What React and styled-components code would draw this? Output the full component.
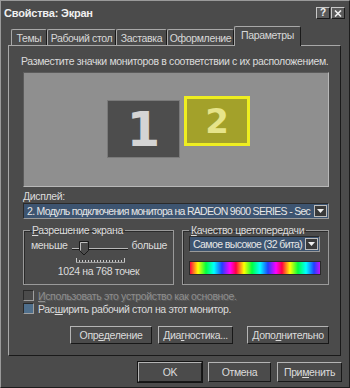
import React from "react";
import styled, { createGlobalStyle } from "styled-components";

const Global = createGlobalStyle`
  html, body {
    margin: 0;
    padding: 0;
    background: #4b4b4b;
  }
  body {
    font-family: "Liberation Sans", Arial, sans-serif;
    font-size: 10.5px;
    letter-spacing: -0.35px;
    color: #dcdcdc;
  }
`;

const Window = styled.div`
  box-sizing: border-box;
  width: 350px;
  height: 388px;
  background: #4b4b4b;
  border-top: 1px solid #9a9a9a;
  border-left: 1px solid #9a9a9a;
  border-right: 1px solid #1c1c1c;
  border-bottom: 1px solid #1c1c1c;
  display: flex;
  flex-direction: column;
  overflow: hidden;
`;

const TitleBar = styled.div`
  height: 20px;
  display: flex;
  align-items: center;
  justify-content: space-between;
  padding: 2px 4px 0 3px;
`;

const Title = styled.span`
  font-weight: bold;
  font-size: 11px;
  letter-spacing: -0.2px;
  color: #f0f0f0;
`;

const TitleButtons = styled.div`
  display: flex;
  gap: 1px;
`;

const TitleButton = styled.div`
  box-sizing: border-box;
  width: 14px;
  height: 12px;
  background: #5a5a5a;
  border-top: 1px solid #c8c8c8;
  border-left: 1px solid #c8c8c8;
  border-right: 1px solid #1a1a1a;
  border-bottom: 1px solid #1a1a1a;
  display: flex;
  align-items: center;
  justify-content: center;
  font-weight: bold;
  font-size: 10px;
  color: #f0f0f0;
  line-height: 1;
`;

const Body = styled.div`
  padding: 4px 8px 0 7px;
  display: flex;
  flex-direction: column;
`;

const TabStrip = styled.div`
  display: flex;
  align-items: flex-end;
  height: 18px;
  padding-left: 3px;
  position: relative;
  z-index: 1;
`;

const Tab = styled.div`
  box-sizing: border-box;
  width: ${(p) => p.$w}px;
  height: ${(p) => (p.$active ? 20 : 16)}px;
  margin-bottom: ${(p) => (p.$active ? -1 : 0)}px;
  background: #4b4b4b;
  border-top: 1px solid #a8a8a8;
  border-left: 1px solid #a8a8a8;
  border-right: 1px solid #1a1a1a;
  border-radius: 2px 2px 0 0;
  display: flex;
  align-items: center;
  justify-content: center;
  padding-bottom: ${(p) => (p.$active ? 3 : 0)}px;
  color: #d8d8d8;
  white-space: nowrap;
`;

const Panel = styled.div`
  box-sizing: border-box;
  height: 311px;
  border-top: 1px solid #a8a8a8;
  border-left: 1px solid #a8a8a8;
  border-right: 1px solid #1a1a1a;
  border-bottom: 1px solid #1a1a1a;
  padding: 9px 11px 0 14px;
  display: flex;
  flex-direction: column;
`;

const Hint = styled.div`
  height: 14px;
  margin-left: -2px;
  white-space: nowrap;
`;

const MonitorArea = styled.div`
  box-sizing: border-box;
  position: relative;
  height: 115px;
  margin-top: 3px;
  background: #8f8f8f;
  border-top: 1px solid #5c5c5c;
  border-left: 1px solid #5c5c5c;
  border-right: 1px solid #b8b8b8;
  border-bottom: 1px solid #b8b8b8;
`;

const Monitor = styled.div`
  box-sizing: border-box;
  position: absolute;
  left: ${(p) => p.$x}px;
  top: ${(p) => p.$y}px;
  width: ${(p) => p.$w}px;
  height: ${(p) => p.$h}px;
  background: ${(p) => p.$bg};
  border: ${(p) => p.$border};
  display: flex;
  align-items: center;
  justify-content: center;
  font-family: "DejaVu Sans", Arial, sans-serif;
  font-weight: bold;
  font-size: ${(p) => p.$size}px;
  letter-spacing: 0;
  color: ${(p) => p.$fg};
  line-height: 1;
`;

const FieldLabel = styled.div`
  margin-top: 3px;
  height: 13px;
`;

const Select = styled.div`
  box-sizing: border-box;
  height: ${(p) => p.$h || 16}px;
  width: ${(p) => (p.$w ? `${p.$w}px` : "auto")};
  background: #3d5470;
  border-top: 1px solid #2a2a2a;
  border-left: 1px solid #2a2a2a;
  border-right: 1px solid #9a9a9a;
  border-bottom: 1px solid #9a9a9a;
  display: flex;
  align-items: center;
  padding-left: 3px;
  color: #e6e6e6;
  overflow: hidden;
  white-space: nowrap;
  letter-spacing: ${(p) => p.$spacing || "inherit"};
`;

const SelectText = styled.span`
  flex: 1;
  overflow: hidden;
`;

const ArrowButton = styled.div`
  box-sizing: border-box;
  flex: none;
  width: 13px;
  height: 12px;
  margin-right: 1px;
  background: #3a3a3a;
  border: 1px solid #bdbdbd;
  display: flex;
  align-items: center;
  justify-content: center;
`;

const Groups = styled.div`
  display: flex;
  gap: 8px;
  margin-top: 5px;
`;

const GroupBox = styled.fieldset`
  box-sizing: border-box;
  margin: 0;
  width: ${(p) => p.$w}px;
  height: 61px;
  border: 1px solid #9a9a9a;
  box-shadow: inset 1px 1px 0 #2a2a2a;
  padding: 0 6px;
  display: flex;
  flex-direction: column;
  min-width: 0;
`;

const Legend = styled.legend`
  padding: 0 2px;
  margin-left: 0;
  line-height: 12px;
  white-space: nowrap;
`;

const SliderRow = styled.div`
  display: flex;
  align-items: flex-start;
  justify-content: space-between;
  height: 26px;
  margin-top: 3px;
  padding-left: 1px;
`;

const SliderTrack = styled.div`
  margin-top: 1px;
`;

const Caption = styled.div`
  text-align: center;
  line-height: 12px;
`;

const Rainbow = styled.div`
  height: 12px;
  margin-top: 9px;
  margin-right: 1px;
  border: 1px solid #2a2a2a;
  background: repeating-linear-gradient(
    90deg,
    #ff0040 0px,
    #ffff00 8px,
    #00ff40 16px,
    #00ffff 24px,
    #2040ff 32px,
    #ff00ff 40px,
    #ff0040 46px
  );
`;

const Checks = styled.div`
  display: flex;
  flex-direction: column;
  gap: 2px;
  margin-top: 5px;
`;

const CheckRow = styled.div`
  display: flex;
  align-items: center;
  gap: 4px;
  height: 11px;
  color: ${(p) => (p.$disabled ? "#8e8e8e" : "#dcdcdc")};
  text-shadow: ${(p) => (p.$disabled ? "1px 1px 0 #5e5e5e" : "none")};
`;

const Box = styled.div`
  box-sizing: border-box;
  width: 11px;
  height: 11px;
  background: ${(p) => (p.$disabled ? "#4b4b4b" : "#4f6f8c")};
  border-top: 1px solid #2a2a2a;
  border-left: 1px solid #2a2a2a;
  border-right: 1px solid #a0a0a0;
  border-bottom: 1px solid #a0a0a0;
`;

const ButtonRow = styled.div`
  display: flex;
  justify-content: flex-end;
  gap: ${(p) => p.$gap}px;
  margin-top: ${(p) => p.$mt}px;
  margin-right: ${(p) => p.$mr || 0}px;
`;

const Button = styled.div`
  box-sizing: border-box;
  width: ${(p) => p.$w}px;
  height: ${(p) => p.$h || 18}px;
  margin-left: ${(p) => p.$ml || 0}px;
  background: #4b4b4b;
  border-top: 1px solid #b4b4b4;
  border-left: 1px solid #b4b4b4;
  border-right: 1px solid #181818;
  border-bottom: 1px solid #181818;
  box-shadow: ${(p) => (p.$default ? "0 0 0 1px #141414" : "none")};
  display: flex;
  align-items: center;
  justify-content: center;
  color: #dcdcdc;
  white-space: nowrap;
`;

const U = styled.span`
  text-decoration: underline;
`;

function Arrow() {
  return (
    <ArrowButton>
      <svg width="7" height="4" viewBox="0 0 7 4">
        <path d="M0 0h7L3.5 4z" fill="#f0f0f0" />
      </svg>
    </ArrowButton>
  );
}

function Slider() {
  const ticks = [];
  for (let x = 1; x <= 49; x += 3) ticks.push(x);
  return (
    <svg width="62" height="26" viewBox="0 0 62 26" style={{ display: "block" }}>
      <line x1="3" y1="8.5" x2="59" y2="8.5" stroke="#b8b8b8" />
      <line x1="3" y1="9.5" x2="59" y2="9.5" stroke="#1e1e1e" />
      <path d="M10.5 1.5h9v9l-4.5 4.5l-4.5-4.5z" fill="#4b4b4b" stroke="#1a1a1a" />
      <path d="M11.5 2.5h7" fill="none" stroke="#c0c0c0" />
      <path d="M11.5 2.5v8" fill="none" stroke="#c0c0c0" />
      <g transform="translate(6 0)">
        {ticks.map((x) => (
          <line
            key={x}
            x1={x + 0.5}
            y1={x === 1 || x === 49 ? 18 : 20}
            x2={x + 0.5}
            y2="23"
            stroke="#c8c8c8"
          />
        ))}
        <line x1="1" y1="22.5" x2="50" y2="22.5" stroke="#9a9a9a" />
      </g>
    </svg>
  );
}

export default function App() {
  return (
    <>
      <Global />
      <Window>
        <TitleBar>
          <Title>Свойства: Экран</Title>
          <TitleButtons>
            <TitleButton>?</TitleButton>
            <TitleButton>
              <svg width="8" height="7" viewBox="0 0 8 7">
                <path d="M1 0.5l6 6M7 0.5l-6 6" stroke="#f0f0f0" strokeWidth="1.6" />
              </svg>
            </TitleButton>
          </TitleButtons>
        </TitleBar>
        <Body>
          <TabStrip>
            <Tab $w={36}>Темы</Tab>
            <Tab $w={69}>Рабочий стол</Tab>
            <Tab $w={51}>Заставка</Tab>
            <Tab $w={67}>Оформление</Tab>
            <Tab $w={67} $active>
              Параметры
            </Tab>
          </TabStrip>
          <Panel>
            <Hint>Разместите значки мониторов в соответствии с их расположением.</Hint>
            <MonitorArea>
              <Monitor
                $x={83}
                $y={27}
                $w={73}
                $h={58}
                $bg="#4d4d4d"
                $border="1px solid #7a7a7a"
                $fg="#d4d4d4"
                $size={48}
              >
                1
              </Monitor>
              <Monitor
                $x={160}
                $y={23}
                $w={66}
                $h={50}
                $bg="#a3a12a"
                $border="3px solid #eeee20"
                $fg="#e6e48a"
                $size={34}
              >
                2
              </Monitor>
            </MonitorArea>
            <FieldLabel>
              <U>Д</U>исплей:
            </FieldLabel>
            <Select $spacing="-0.7px">
              <SelectText>2. Модуль подключения монитора на RADEON 9600 SERIES - Sec</SelectText>
              <Arrow />
            </Select>
            <Groups>
              <GroupBox $w={152}>
                <Legend>
                  <U>Р</U>азрешение экрана
                </Legend>
                <SliderRow>
                  <span>меньше</span>
                  <SliderTrack>
                    <Slider />
                  </SliderTrack>
                  <span>больше</span>
                </SliderRow>
                <Caption>1024 на 768 точек</Caption>
              </GroupBox>
              <GroupBox $w={148}>
                <Legend>
                  <U>К</U>ачество цветопередачи
                </Legend>
                <Select $w={131} $h={16} $spacing="-0.6px">
                  <SelectText>Самое высокое (32 бита)</SelectText>
                  <Arrow />
                </Select>
                <Rainbow />
              </GroupBox>
            </Groups>
            <Checks>
              <CheckRow $disabled>
                <Box $disabled />
                <span>
                  <U>И</U>спользовать это устройство как основное.
                </span>
              </CheckRow>
              <CheckRow>
                <Box />
                <span>
                  Рас<U>ш</U>ирить рабочий стол на этот монитор.
                </span>
              </CheckRow>
            </Checks>
            <ButtonRow $gap={6} $mt={12}>
              <Button $w={82}>
                Опр<U>е</U>деление
              </Button>
              <Button $w={75}>
                Диа<U>г</U>ностика...
              </Button>
              <Button $w={82} $ml={8}>
                Допо<U>л</U>нительно
              </Button>
            </ButtonRow>
          </Panel>
          <ButtonRow $gap={6} $mt={6} $mr={-1}>
            <Button $w={64} $h={20} $default>
              OK
            </Button>
            <Button $w={63} $h={20}>
              Отмена
            </Button>
            <Button $w={65} $h={20}>
              При<U>м</U>енить
            </Button>
          </ButtonRow>
        </Body>
      </Window>
    </>
  );
}
